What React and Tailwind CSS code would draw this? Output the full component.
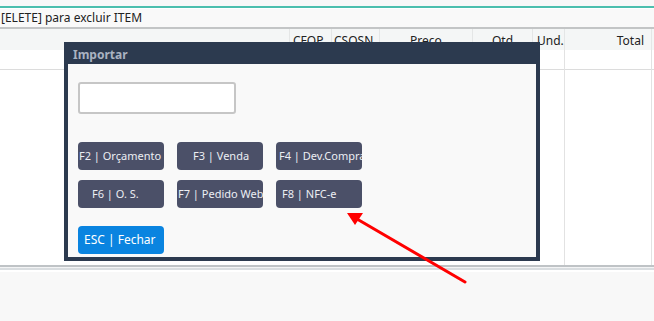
import React from "react";

function Btn({ children, pl, blue }) {
  return (
    <div
      className={
        "w-[86px] h-[28px] rounded-[4px] flex items-center overflow-hidden whitespace-nowrap text-[11px] " +
        (blue ? "bg-[#0a84e0] text-white text-[12px]" : "bg-[#4b5068] text-[#eceef3]")
      }
    >
      <span className={pl}>{children}</span>
    </div>
  );
}

export default function App() {
  return (
    <div className="relative w-[654px] h-[321px] overflow-hidden bg-[#f8f8f8] font-['Noto_Sans',sans-serif] text-[#222]">
      {/* top strip */}
      <div className="h-[6px] bg-[#f8f8f8]" />
      <div className="h-[2px] bg-[#4cbfae]" />
      <div className="h-px bg-white" />
      <div className="h-[18px] bg-[#f9f9f9] text-[12px] leading-[18px] whitespace-nowrap">
        <span className="pl-[1px]">[ELETE] para excluir ITEM</span>
      </div>
      <div className="h-[2px] bg-[#c3c5c6]" />
      {/* header row */}
      <div className="flex h-[21px] bg-[#f4f6f6] text-[12px] leading-[24px] whitespace-nowrap">
        <div className="w-[290px] border-r border-[#e4e6e6]" />
        <div className="w-[42px] border-r border-[#e4e6e6] pl-[3px]">CFOP</div>
        <div className="w-[48px] border-r border-[#e4e6e6] pl-[2px]">CSOSN</div>
        <div className="w-[93px] border-r border-[#e4e6e6] text-center">Preco</div>
        <div className="w-[60px] border-r border-[#e4e6e6] text-center">Qtd</div>
        <div className="w-[32px] border-r border-[#e4e6e6] pl-[4px]">Und.</div>
        <div className="w-[87px] border-r border-[#e4e6e6] text-right pr-[7px]">Total</div>
        <div className="flex-1" />
      </div>
      {/* body */}
      <div className="flex h-[215px] bg-white">
        <div className="w-[565px] border-r border-[#e2e2e2] flex flex-col">
          <div className="h-[20px] border-b border-[#dcdcdc]" />
        </div>
        <div className="w-[87px] border-r border-[#e2e2e2] flex flex-col">
          <div className="h-[20px] border-b border-[#dcdcdc]" />
        </div>
        <div className="flex-1 flex flex-col">
          <div className="h-[20px] border-b border-[#dcdcdc]" />
        </div>
      </div>
      {/* bottom lines */}
      <div className="h-[2px] bg-[#bfc3c6]" />
      <div className="h-px bg-[#f3f4f5]" />
      <div className="h-[2px] bg-[#d9dde0]" />
      <div className="h-[2px] bg-white" />

      {/* modal */}
      <div className="absolute left-[64px] top-[42px] w-[476px] h-[219px] border-4 border-[#2c3a4f] bg-[#2c3a4f] flex flex-col">
        <div className="h-[18px] pl-[5px] text-[12px] font-bold text-[#aab3c1] leading-[18px]">
          Importar
        </div>
        <div className="flex-1 bg-[#f9f9f9] pl-[10px] pt-[18px] flex flex-col">
          <div className="w-[158px] h-[32px] border-2 border-[#c6c6c6] rounded-[3px] bg-white" />
          <div className="mt-[28px] flex gap-[13px]">
            <Btn pl="pl-[1px]">F2 | Orçamento</Btn>
            <Btn pl="pl-[16px]">F3 | Venda</Btn>
            <Btn pl="pl-[3px]">F4 | Dev.Compra</Btn>
          </div>
          <div className="mt-[10px] flex gap-[13px]">
            <Btn pl="pl-[14px]">F6 | O. S.</Btn>
            <Btn pl="pl-[1px]">F7 | Pedido Web</Btn>
            <Btn pl="pl-[6px]">F8 | NFC-e</Btn>
          </div>
          <div className="mt-[18px]">
            <Btn pl="pl-[6px]" blue>
              ESC | Fechar
            </Btn>
          </div>
        </div>
      </div>

      {/* red arrow annotation */}
      <svg className="absolute left-0 top-0" width="654" height="321" viewBox="0 0 654 321">
        <line x1="465" y1="282" x2="357" y2="219" stroke="#f00" strokeWidth="3" strokeLinecap="round" />
        <polygon points="347,213 363,213 355,225" fill="#f00" />
      </svg>
    </div>
  );
}
